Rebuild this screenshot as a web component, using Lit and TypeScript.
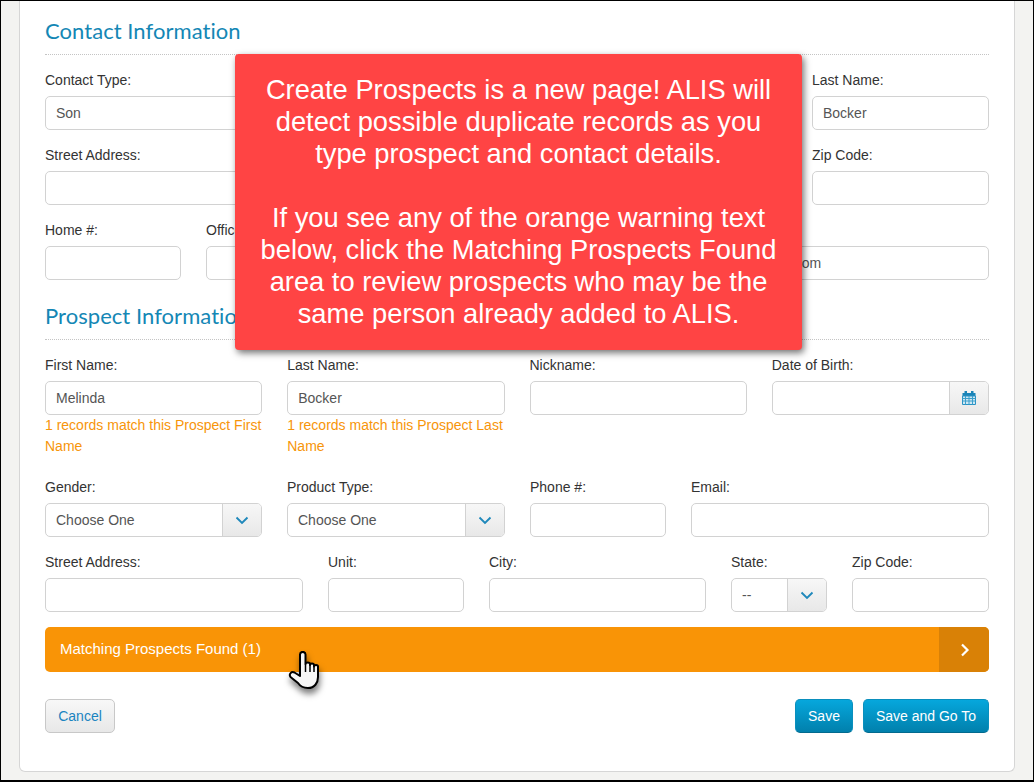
import { LitElement, html, css } from "lit";
import { customElement } from "lit/decorators.js";

const chevron = html`<svg class="chev" width="14" height="9" viewBox="0 0 14 9"><path d="M1.500 1.500 7 7l5.500-5.500" fill="none" stroke="#1f88bb" stroke-width="1.900"/></svg>`;

@customElement("app-root")
export class AppRoot extends LitElement {
  static styles = css`
    :host { display: block; width: 1034px; height: 782px; box-sizing: border-box; overflow: hidden; position: relative;
      background: #f3f3f1; border-top: 1px solid #000; border-left: 1px solid #000; border-right: 1px solid #000; border-bottom: 2px solid #000;
      font-family: "Liberation Sans", Arial, sans-serif; font-size: 14px; color: #333; }
    .card { box-sizing: border-box; margin: 0 18px; height: 771px; background: #fff; border: 1px solid #d6d6d6; border-top: 0; border-radius: 0 0 6px 6px; padding: 14px 25px 0; }
    h2 { margin: 0; font: 400 22px/32px Lato, sans-serif; letter-spacing: 0.05px; color: #1487b5; height: 39px; border-bottom: 1px dotted #c4c4c4; }
    .h2b { margin-top: 20px; }
    .row { display: grid; column-gap: 25px; margin-top: 17px; }
    .c1 { grid-template-columns: 230px 1fr 177px; }
    .c3 { grid-template-columns: 136px 136px 1fr 298px; }
    .p1 { grid-template-columns: repeat(4, 1fr); height: 122px; }
    .p2 { grid-template-columns: 217px 218px 136px 1fr; margin-top: 0; }
    .p3 { grid-template-columns: 258px 136px 217px 96px 1fr; }
    .f { min-width: 0; }
    label { display: block; height: 16px; line-height: 16px; margin-bottom: 8px; }
    .in { box-sizing: border-box; height: 34px; border: 1px solid #d2d2d2; border-radius: 5px; background: #fff; padding: 0 10px; line-height: 32px; color: #555; white-space: nowrap; overflow: hidden; }
    .group { display: flex; height: 34px; box-sizing: border-box; border: 1px solid #d2d2d2; border-radius: 5px; overflow: hidden; background: #fff; }
    .val { flex: 1; min-width: 0; padding: 0 10px; line-height: 32px; color: #555; }
    .addon { width: 38px; flex: none; border-left: 1px solid #d2d2d2; background: linear-gradient(#f7f7f7, #e8e8e8); display: flex; align-items: center; justify-content: center; }
    .warn { color: #f7950a; line-height: 21px; }
    .bar { display: flex; height: 45px; margin-top: 15px; border-radius: 5px; overflow: hidden; background: #f99406; color: #fff; font-size: 15px; }
    .t { flex: 1; padding-left: 15px; line-height: 44px; }
    .go { width: 50px; background: #d98106; display: flex; align-items: center; justify-content: center; padding-left: 1px; box-sizing: border-box; }
    .actions { display: flex; align-items: center; margin-top: 27px; gap: 10px; }
    .btn { box-sizing: border-box; height: 34px; border-radius: 5px; line-height: 32px; text-align: center; }
    .cancel { width: 70px; border: 1px solid #c8c8c8; background: linear-gradient(#f8f8f8, #e8e8e8); color: #1a84c0; margin-right: auto; }
    .pri { color: #fff; background: linear-gradient(#06a7dc, #0180ac); border: 1px solid #0a8fbd; border-bottom-color: #036a8e; }
    .save { width: 58px; }
    .sgt { width: 126px; }
    .tip { position: absolute; left: 234px; top: 53px; width: 567px; height: 296px; box-sizing: border-box; background: #ff4444; border-radius: 4px; box-shadow: 2px 3px 7px rgba(0,0,0,.55); color: #fff; font-size: 27.3px; line-height: 32px; text-align: center; padding: 20px 18px 0; }
    .tip p { margin: 0 0 32px; }
    .hand { position: absolute; left: 287px; top: 650px; filter: drop-shadow(1px 5px 3px rgba(0,0,0,.5)); }
  `;

  private field(label: string, value = "") {
    return html`<div class="f"><label>${label}</label><div class="in">${value}</div></div>`;
  }
  private sel(label: string, value: string) {
    return html`<div class="f"><label>${label}</label><div class="group"><div class="val">${value}</div><div class="addon">${chevron}</div></div></div>`;
  }
  private warn(label: string, value: string, msg: string) {
    return html`<div class="f"><label>${label}</label><div class="in">${value}</div><div class="warn">${msg}</div></div>`;
  }

  render() {
    return html`
      <div class="card">
        <h2>Contact Information</h2>
        <div class="row c1">${this.field("Contact Type:", "Son")}<div></div>${this.field("Last Name:", "Bocker")}</div>
        <div class="row c1">${this.field("Street Address:")}<div></div>${this.field("Zip Code:")}</div>
        <div class="row c3">${this.field("Home #:")}${this.field("Office #:")}<div></div>${this.field("Email:", "kbocker@mail.com")}</div>
        <h2 class="h2b">Prospect Information</h2>
        <div class="row p1">
          ${this.warn("First Name:", "Melinda", "1 records match this Prospect First Name")}
          ${this.warn("Last Name:", "Bocker", "1 records match this Prospect Last Name")}
          ${this.field("Nickname:")}
          <div class="f"><label>Date of Birth:</label><div class="group"><div class="val"></div><div class="addon">
            <svg width="14" height="14" viewBox="0 0 14 14"><path d="M.5 2h13v3.500H.5z" fill="#1a84b8"/><path d="M2.500 0h2.500v3H2.500zM9 0h2.500v3H9z" fill="#1a84b8"/><path d="M.5 5h13v8.500H.5z" fill="#cfe7f3" stroke="#2a93c4"/><path d="M.5 7.500h13M.5 10h13M3.500 5v8.500M7 5v8.500M10.500 5v8.500" stroke="#3a9fcc" fill="none"/></svg>
          </div></div></div>
        </div>
        <div class="row p2">${this.sel("Gender:", "Choose One")}${this.sel("Product Type:", "Choose One")}${this.field("Phone #:")}${this.field("Email:")}</div>
        <div class="row p3">${this.field("Street Address:")}${this.field("Unit:")}${this.field("City:")}${this.sel("State:", "--")}${this.field("Zip Code:")}</div>
        <div class="bar"><div class="t">Matching Prospects Found (1)</div><div class="go"><svg width="10" height="14" viewBox="0 0 10 14"><path d="M2 1.500 7.500 7 2 12.500" fill="none" stroke="#fff" stroke-width="2.200"/></svg></div></div>
        <div class="actions"><div class="btn cancel">Cancel</div><div class="btn pri save">Save</div><div class="btn pri sgt">Save and Go To</div></div>
      </div>
      <div class="tip"><p>Create Prospects is a new page! ALIS will detect possible duplicate records as you type prospect and contact details.</p><p>If you see any of the orange warning text below, click the Matching Prospects Found area to review prospects who may be the same person already added to ALIS.</p></div>
      <svg class="hand" width="34" height="40" viewBox="0 0 34 40">
        <path d="M12 3.500c0-3.500 5.500-3.500 5.500 0V13c0-2 4.500-2 4.500 0v1c0-2 4-2 4 0v1.500c0-2 4-2 4 0V26c0 6-3.500 11-10 11-5 0-8-2-10-5L2.500 26c-2-3 1-6 4-4.500L12 25z" fill="#f7f7f7" stroke="#000" stroke-width="2" stroke-linejoin="round"/>
        <path d="M17.500 13v8M22 14v7M26 15.500V21" stroke="#000" stroke-width="1.500" fill="none"/>
      </svg>
    `;
  }
}
